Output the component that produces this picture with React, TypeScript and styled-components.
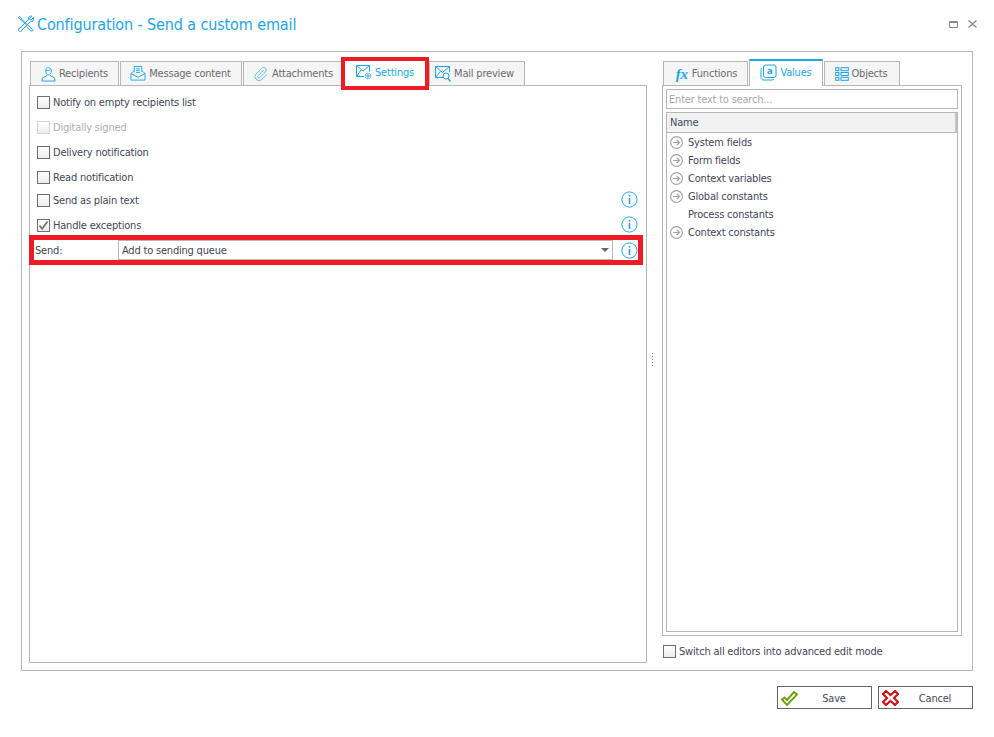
import React from "react";
import styled, { createGlobalStyle } from "styled-components";

const Global = createGlobalStyle`
  html, body { margin: 0; padding: 0; background: #fff; }
  body { font-family: "DejaVu Sans Condensed", "DejaVu Sans", sans-serif; font-size: 11px; letter-spacing: -0.2px; color: #45465a; }
`;
const line = "#b7b7b7";
const blue = "#1ea5e8";

const Page = styled.div`
  width: 994px; height: 737px; display: flex; flex-direction: column; overflow: hidden;
`;
const TitleBar = styled.header`
  height: 51px; display: flex; align-items: flex-start; padding: 15px 17px 0 17px; box-sizing: border-box;
`;
const TitleText = styled.h1`
  margin: 1px 0 0 2px; font-size: 16px; font-weight: 400; line-height: 18px; color: ${blue}; flex: 1; letter-spacing: -0.12px;
`;
const WinButtons = styled.div`
  display: flex; align-items: center; gap: 10px; height: 18px; color: #8a8a8a;
`;
const Frame = styled.main`
  margin: 0 21px; height: 620px; box-sizing: border-box; border: 1px solid ${line}; display: flex; padding: 9px 10px 7px 7px;
`;
const LeftColumn = styled.section`
  width: 618px; display: flex; flex-direction: column;
`;
const TabStrip = styled.nav<{ $inset: number }>`
  height: 24px; flex: none; display: flex; gap: 1px; padding-left: ${p => p.$inset}px; position: relative; z-index: 1;
`;
const Tab = styled.div<{ $w: number; $active?: boolean; $flagged?: boolean; $top?: boolean; $nudge?: number }>`
  width: ${p => p.$w}px; box-sizing: border-box; display: flex; align-items: center; justify-content: center; gap: 3px;
  color: ${p => (p.$active ? blue : "#6a6a74")};
  background: ${p => (p.$active ? "#fff" : "#f5f5f5")};
  border: 1px solid ${line};
  border-bottom: ${p => (p.$active ? "none" : `1px solid ${line}`)};
  height: ${p => (p.$top ? 27 : 25)}px;
  margin-top: ${p => (p.$top ? -2 : 0)}px;
  padding-bottom: ${p => (p.$active ? 2 : 0)}px;
  padding-right: ${p => (p.$nudge && p.$nudge < 0 ? -p.$nudge : 0)}px;
  padding-left: ${p => (p.$nudge && p.$nudge > 0 ? p.$nudge : 0)}px;
  ${p => p.$top && `border-top: 2px solid ${blue};`}
  ${p => p.$flagged && `outline: 4px solid #ed1c24; border: none; margin-left: 1px; margin-right: 3px; z-index: 2; height: 25px;`}
`;
const Panel = styled.div`
  flex: 1; box-sizing: border-box; border: 1px solid ${line}; background: #fff; padding-top: 4px; display: flex; flex-direction: column; min-height: 0;
`;
const OptionRow = styled.label<{ $h: number; $off?: boolean; $drop?: number }>`
  height: ${p => p.$h}px; box-sizing: border-box; display: flex; align-items: center; padding: ${p => p.$drop ?? 0}px 9px 0 7px; gap: 3px;
  color: ${p => (p.$off ? "#aeaeae" : "inherit")};
`;
const Box = styled.span<{ $off?: boolean }>`
  width: 13px; height: 13px; box-sizing: border-box; border: 1px solid ${p => (p.$off ? "#d4d4d4" : "#6f6f6f")};
  background: linear-gradient(#fff, #ececec); display: inline-flex; align-items: center; justify-content: center; flex: none;
`;
const OptionLabel = styled.span` flex: 1; `;
const RowInfo = styled.span<{ $lift?: number }>`
  display: flex; margin-top: -${p => p.$lift ?? 0}px; margin-right: -1px;
`;
const SendRow = styled.div`
  margin-right: 3px; height: 30px; flex: none; box-sizing: border-box; border: 5px solid #ed1c24; margin-left: -1px; display: flex; align-items: stretch;
`;
const SendLabel = styled.span` width: 83px; padding-left: 1px; box-sizing: content-box; display: flex; align-items: center; `;
const Combo = styled.div`
  width: 495px; box-sizing: border-box; border: 1px solid ${line}; display: flex; align-items: center; justify-content: space-between; padding: 0 3px;
`;
const Caret = styled.i`
  width: 0; height: 0; border-left: 4px solid transparent; border-right: 4px solid transparent; border-top: 4px solid #666; margin-right: 0;
`;
const InfoSlot = styled.span`
  flex: 1; display: flex; align-items: center; padding-left: 8px;
`;
const Splitter = styled.div`
  width: 15px; display: flex; align-items: center; justify-content: flex-start; padding-left: 5px; box-sizing: border-box;
`;
const Dots = styled.i`
  display: block; width: 1px; height: 15px; margin-top: -4px;
  background: repeating-linear-gradient(#777 0 1px, transparent 1px 3px);
`;
const RightColumn = styled.aside`
  width: 300px; display: flex; flex-direction: column;
`;
const RightPanel = styled.div`
  height: 551px; flex: none; box-sizing: border-box; border: 1px solid ${line}; padding: 3px; background: #fff; display: flex; flex-direction: column;
`;
const Search = styled.div`
  height: 20px; box-sizing: border-box; border: 1px solid ${line}; color: #a8a8a8; display: flex; align-items: center; padding-left: 2px; flex: none;
`;
const Tree = styled.div`
  flex: 1; margin-top: 3px; box-sizing: border-box; border: 1px solid ${line};
`;
const TreeHead = styled.div`
  height: 20px; box-sizing: border-box; background: #f2f2f2; border-bottom: 1px solid ${line}; border-right: 2px solid #c4c4c4; padding-left: 3px; display: flex; align-items: center;
`;
const TreeList = styled.ul` list-style: none; margin: 0; padding: 0; `;
const TreeItem = styled.li`
  height: 18px; display: flex; align-items: center; padding-left: 3px; gap: 5px;
`;
const ArrowSlot = styled.span` width: 13px; height: 13px; display: flex; flex: none; `;
const AdvancedRow = styled.label`
  display: flex; align-items: center; gap: 3px; height: 27px; padding: 3px 0 0 1px; box-sizing: border-box; flex: none;
`;
const Footer = styled.footer`
  display: flex; justify-content: flex-end; gap: 6px; padding: 15px 21px 0 0;
`;
const Btn = styled.button`
  width: 95px; height: 23px; box-sizing: border-box; background: #fff; border: 1px solid #666; font: inherit; letter-spacing: -0.2px; color: #45465a; padding: 1px 0 0 3px;
  display: grid; grid-template-columns: 20px 1fr 4px; align-items: center;
`;
const FxMark = styled.span`
  font-family: "Liberation Serif", serif; font-style: italic; font-weight: 700; font-size: 15px; color: ${blue}; line-height: 14px; margin-right: 1px;
`;
const Ico = styled.svg.attrs({ fill: "none", stroke: blue, strokeWidth: 1 })` flex: none; display: block; `;

const Tools = () => (
  <Ico width="18" height="18" viewBox="0 0 18 18" strokeWidth="1.5">
    <path d="M2 1 L5 4 L5 5.5 L10 10.5 M5.5 5 L10.5 10 M1 2 L4 5 L5 5" />
    <path d="M16.5 2.5 L14 5 L12.8 4.8 L12.6 3.6 L15 1.2 C12.8 0.6 11 2.4 11.5 4.5 L3 13 C1.5 13 1 14.6 1.8 15.8 C3 17 4.8 16.4 5 15 L13.5 6.5 C15.6 7 17.2 5 16.5 2.5 Z" />
    <path d="M11 10 L15.5 14.5 C16.5 15.5 15 17 14 16 L9.5 11.5" />
  </Ico>
);
const UserIco = () => (
  <Ico width="15" height="16" viewBox="0 0 16 16">
    <path d="M5 5 C5 2.5 6.5 1 8 1 C9.5 1 11 2.5 11 5 C11 7 9.5 9 8 9 C6.5 9 5 7 5 5 Z M5 4.5 C7 4.5 9 4 10 3" />
    <path d="M6 9 L6 10 L1.5 12 L1 15.5 L15 15.5 L14.5 12 L10 10 L10 9" />
  </Ico>
);
const MessageIco = () => (
  <Ico width="16" height="17" viewBox="0 0 17 17">
    <path d="M4.5 7 L4.5 1 L12.5 1 L12.5 7 M6.5 3.5 L10.5 3.5 M6.5 5.5 L10.5 5.5 M6.5 7.5 L10.5 7.5" />
    <path d="M4 6 L1 8.5 L1 15.5 L16 15.5 L16 8.5 L13 6 M1 8.5 L8.5 12.5 L16 8.5" />
  </Ico>
);
const ClipIco = () => (
  <Ico width="16" height="16" viewBox="0 0 24 24" strokeWidth="1.5">
    <path d="M13.234 20.252 21 12.3" />
    <path d="m16 6-8.414 8.586a2 2 0 0 0 0 2.828 2 2 0 0 0 2.828 0l8.414-8.586a4 4 0 0 0 0-5.656 4 4 0 0 0-5.656 0l-8.415 8.585a6 6 0 1 0 8.486 8.486" />
  </Ico>
);
const SettingsMailIco = () => (
  <Ico width="16" height="15" viewBox="0 0 16 15" strokeWidth="0.9">
    <path d="M8 11.5 L0.5 11.5 L0.5 0.5 L13.5 0.5 L13.5 6.5 M0.5 0.5 L7 6 L13.5 0.5 M0.5 11.5 L5 5" />
    <circle cx="12" cy="11" r="1.2" />
    <circle cx="12" cy="11" r="2.8" strokeDasharray="1.4 0.8" />
  </Ico>
);
const PreviewIco = () => (
  <Ico width="16" height="17" viewBox="0 0 16 17" strokeWidth="0.9">
    <path d="M8 12.5 L0.5 12.5 L0.5 1.5 L14.5 1.5 L14.5 7 M0.5 1.5 L7.5 7.5 L14.5 1.5 M0.5 12.5 L5.5 6.5" />
    <circle cx="11" cy="11" r="3" />
    <path d="M13 13.5 L15.5 16.5" strokeWidth="1.4" />
  </Ico>
);
const ValuesIco = () => (
  <Ico width="17" height="17" viewBox="0 0 17 17" strokeWidth="1.3">
    <path d="M2 4 C1 4.5 1 5 1 6 L1 13 C1 15 2 16 4 16 L12 16 C13 16 13.5 15.5 14 15" />
    <rect x="3.5" y="1" width="12.5" height="12.5" rx="2" />
    <text x="9.7" y="10" fontSize="9" fontFamily="DejaVu Sans" fontWeight="700" fill={blue} stroke="none" textAnchor="middle">a</text>
  </Ico>
);
const ObjectsIco = () => (
  <Ico width="14" height="14" viewBox="0 0 14 14" strokeWidth="1.3" stroke="#1a8fd0">
    <rect x="0.7" y="0.7" width="3.2" height="3" />
    <rect x="0.7" y="5.5" width="3.2" height="3" />
    <rect x="0.7" y="10.3" width="3.2" height="3" />
    <rect x="6" y="0.7" width="7.3" height="3" />
    <rect x="6" y="5.5" width="7.3" height="3" />
    <rect x="6" y="10.3" width="7.3" height="3" />
  </Ico>
);
const Info = () => (
  <Ico width="17" height="17" viewBox="0 0 17 17" strokeWidth="1.3">
    <circle cx="8.5" cy="8.5" r="7.6" />
    <path d="M8.5 7 L8.5 13" strokeWidth="1.6" />
    <path d="M8.5 4 L8.5 5.6" strokeWidth="1.6" />
  </Ico>
);
const Arrow = () => (
  <svg width="13" height="13" viewBox="0 0 13 13" fill="none" stroke="#a3a3a3" strokeWidth="1.2">
    <circle cx="6.5" cy="6.5" r="5.9" />
    <path d="M3 6.5 L9.5 6.5 M6.8 3.8 L9.5 6.5 L6.8 9.2" />
  </svg>
);
const Tick = () => (
  <svg width="11" height="11" viewBox="0 0 11 11" fill="none" stroke="#777" strokeWidth="1.8">
    <path d="M1.5 5.5 L4.2 8.8 L9.5 1.5" />
  </svg>
);
const SaveIco = () => (
  <svg width="17" height="15" viewBox="0 0 17 15" fill="none" stroke="#6f9e10" strokeWidth="1.9">
    <path d="M1 8.5 L3.5 6.5 L6 9 L13 1 L16 3.5 L6 14 Z" />
  </svg>
);
const CancelIco = () => (
  <svg width="17" height="16" viewBox="0 0 17 16" fill="none" stroke="#d10f17" strokeWidth="2.1">
    <path d="M4 1 L8.5 5 L13 1 L16 4 L12 8 L16 12 L13 15 L8.5 11 L4 15 L1 12 L5 8 L1 4 Z" />
  </svg>
);

const options = [
  { label: "Notify on empty recipients list", h: 25 },
  { label: "Digitally signed", h: 25, off: true },
  { label: "Delivery notification", h: 25 },
  { label: "Read notification", h: 24 },
  { label: "Send as plain text", h: 23, info: true, lift: 2 },
  { label: "Handle exceptions", h: 23, info: true, checked: true, drop: 4, lift: 3 },
];
const tree = [
  { label: "System fields", arrow: true },
  { label: "Form fields", arrow: true },
  { label: "Context variables", arrow: true },
  { label: "Global constants", arrow: true },
  { label: "Process constants", arrow: false },
  { label: "Context constants", arrow: true },
];

export default function App() {
  return (
    <Page>
      <Global />
      <TitleBar>
        <Tools />
        <TitleText>Configuration - Send a custom email</TitleText>
        <WinButtons>
          <svg width="9" height="7" viewBox="0 0 9 7" fill="none" stroke="#8a8a8a"><path d="M0.5 0.5 H8.5 V6.5 H0.5 Z M0.5 1.5 H8.5" /></svg>
          <svg width="9" height="8" viewBox="0 0 9 8" fill="none" stroke="#8a8a8a" strokeWidth="1.3"><path d="M0.5 0.5 L8.5 7.5 M8.5 0.5 L0.5 7.5" /></svg>
        </WinButtons>
      </TitleBar>
      <Frame>
        <LeftColumn>
          <TabStrip $inset={1}>
            <Tab $w={89}><UserIco />Recipients</Tab>
            <Tab $w={122} $nudge={-1}><MessageIco />Message content</Tab>
            <Tab $w={100}><ClipIco />Attachments</Tab>
            <Tab $w={80} $active $flagged><SettingsMailIco />Settings</Tab>
            <Tab $w={96} $nudge={-5}><PreviewIco />Mail preview</Tab>
          </TabStrip>
          <Panel>
            {options.map(o => (
              <OptionRow key={o.label} $h={o.h} $off={o.off} $drop={o.drop}>
                <Box $off={o.off}>{o.checked && <Tick />}</Box>
                <OptionLabel>{o.label}</OptionLabel>
                {o.info && <RowInfo $lift={o.lift}><Info /></RowInfo>}
              </OptionRow>
            ))}
            <SendRow>
              <SendLabel>Send:</SendLabel>
              <Combo>Add to sending queue<Caret /></Combo>
              <InfoSlot><Info /></InfoSlot>
            </SendRow>
          </Panel>
        </LeftColumn>
        <Splitter><Dots /></Splitter>
        <RightColumn>
          <TabStrip $inset={1}>
            <Tab $w={85} $nudge={2}><FxMark>fx</FxMark>Functions</Tab>
            <Tab $w={74} $active $top><ValuesIco />Values</Tab>
            <Tab $w={76} $nudge={-2}><ObjectsIco />Objects</Tab>
          </TabStrip>
          <RightPanel>
            <Search>Enter text to search...</Search>
            <Tree>
              <TreeHead>Name</TreeHead>
              <TreeList>
                {tree.map(t => (
                  <TreeItem key={t.label}>
                    <ArrowSlot>{t.arrow && <Arrow />}</ArrowSlot>
                    {t.label}
                  </TreeItem>
                ))}
              </TreeList>
            </Tree>
          </RightPanel>
          <AdvancedRow><Box />Switch all editors into advanced edit mode</AdvancedRow>
        </RightColumn>
      </Frame>
      <Footer>
        <Btn><SaveIco /><span>Save</span></Btn>
        <Btn><CancelIco /><span>Cancel</span></Btn>
      </Footer>
    </Page>
  );
}
